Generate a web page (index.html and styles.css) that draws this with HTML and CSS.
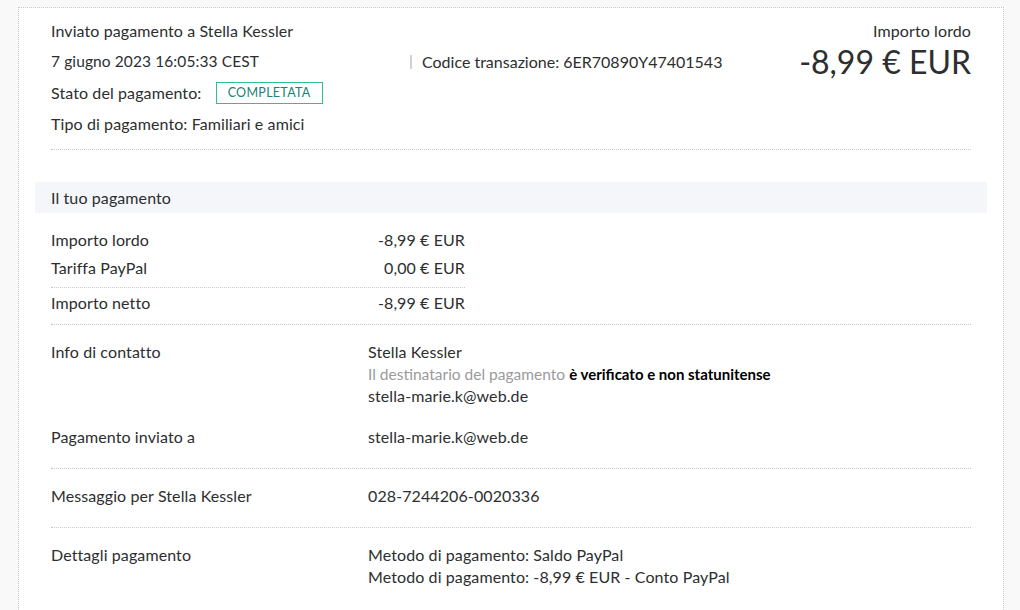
FILE: index.html
```html
<!DOCTYPE html>
<html lang="it">
<head>
<meta charset="utf-8">
<title>Dettagli transazione</title>
<link rel="stylesheet" href="styles.css">
</head>
<body>
<div class="card">
  <section class="summary">
    <div class="summary-left">
      <div class="line">Inviato pagamento a Stella Kessler</div>
      <div class="line date">7 giugno 2023 16:05:33 CEST</div>
      <div class="line">Stato del pagamento: <span class="badge">COMPLETATA</span></div>
      <div class="line">Tipo di pagamento: Familiari e amici</div>
    </div>
    <div class="summary-mid">
      <div class="line code">Codice transazione: 6ER70890Y47401543</div>
    </div>
    <div class="summary-right">
      <div class="label">Importo lordo</div>
      <div class="big">-8,99 € EUR</div>
    </div>
  </section>

  <div class="band">Il tuo pagamento</div>

  <section class="amounts">
    <div class="arow"><span>Importo lordo</span><span>-8,99 € EUR</span></div>
    <div class="arow"><span>Tariffa PayPal</span><span>0,00 € EUR</span></div>
    <div class="arow net"><span>Importo netto</span><span>-8,99 € EUR</span></div>
  </section>

  <section class="detail">
    <div class="drow">
      <div class="dlabel">Info di contatto</div>
      <div class="dval">
        <div>Stella Kessler</div>
        <div><span class="muted">Il destinatario del pagamento</span> <strong>è verificato e non statunitense</strong></div>
        <div>stella-marie.k@web.de</div>
      </div>
    </div>
    <div class="drow sub">
      <div class="dlabel">Pagamento inviato a</div>
      <div class="dval">stella-marie.k@web.de</div>
    </div>
  </section>

  <section class="detail">
    <div class="drow">
      <div class="dlabel">Messaggio per Stella Kessler</div>
      <div class="dval">028-7244206-0020336</div>
    </div>
  </section>

  <section class="detail last">
    <div class="drow">
      <div class="dlabel">Dettagli pagamento</div>
      <div class="dval">
        <div>Metodo di pagamento: Saldo PayPal</div>
        <div>Metodo di pagamento: -8,99 € EUR - Conto PayPal</div>
      </div>
    </div>
  </section>
</div>
</body>
</html>
```

FILE: styles.css
```css
* { box-sizing: border-box; }
html, body { height: 100%; }
body {
  margin: 0;
  background: #f9f9f9;
  font-family: Lato, "Open Sans", sans-serif;
  font-size: 16px;
  letter-spacing: 0.1px;
  color: #2c2e2f;
  overflow: hidden;
}
.card {
  margin: 7px 0 0 18px;
  width: 986px;
  min-height: calc(100% - 7px);
  background: #fff;
  border: 1px dotted #c8c8c8;
  border-bottom: none;
  padding: 7px 32px 0;
}
.summary {
  display: flex;
  border-bottom: 1px dotted #c8c8c8;
  padding-bottom: 10px;
}
.line { height: 31px; line-height: 31px; white-space: nowrap; }
.date { font-size: 15.5px; }
.summary-left { width: 359px; }
.summary-mid { padding-top: 31px; }
.code {
  display: flex;
  align-items: center;
  letter-spacing: 0;
}
.code::before {
  content: "";
  width: 2px;
  height: 14px;
  background: #cfd1d4;
  margin-right: 10px;
}
.summary-right {
  flex: 1;
  text-align: right;
}
.label { height: 31px; line-height: 31px; }
.big {
  font-size: 32px;
  line-height: 32px;
  letter-spacing: 0;
}
.badge {
  display: inline-block;
  margin-left: 10px;
  border: 1px solid #2cc18f;
  color: #1a8277;
  font-size: 12.5px;
  line-height: 20px;
  padding: 0 11px;
  letter-spacing: 0.3px;
  vertical-align: 2px;
}
.band {
  margin: 32px -16px 0;
  background: #f5f6fa;
  height: 31px;
  line-height: 31px;
  padding-left: 16px;
}
.amounts {
  padding-top: 13px;
  border-bottom: 1px dotted #c8c8c8;
  padding-bottom: 8px;
}
.arow {
  width: 414px;
  display: flex;
  justify-content: space-between;
  height: 28px;
  line-height: 28px;
}
.arow:nth-child(2) { height: 34px; border-bottom: 1px dotted #c8c8c8; }
.arow.net { line-height: 30px; }
.detail {
  border-bottom: 1px dotted #c8c8c8;
  padding: 16px 0 20px;
}
.detail.last { border-bottom: none; }
.drow {
  display: flex;
  line-height: 22px;
}
.drow.sub { margin-top: 19px; }
.dlabel { width: 317px; }
.muted { color: #9a9a9a; font-size: 15.5px; letter-spacing: 0; }
.dval strong { color: #000; font-weight: 700; font-size: 15px; letter-spacing: 0; }
```
